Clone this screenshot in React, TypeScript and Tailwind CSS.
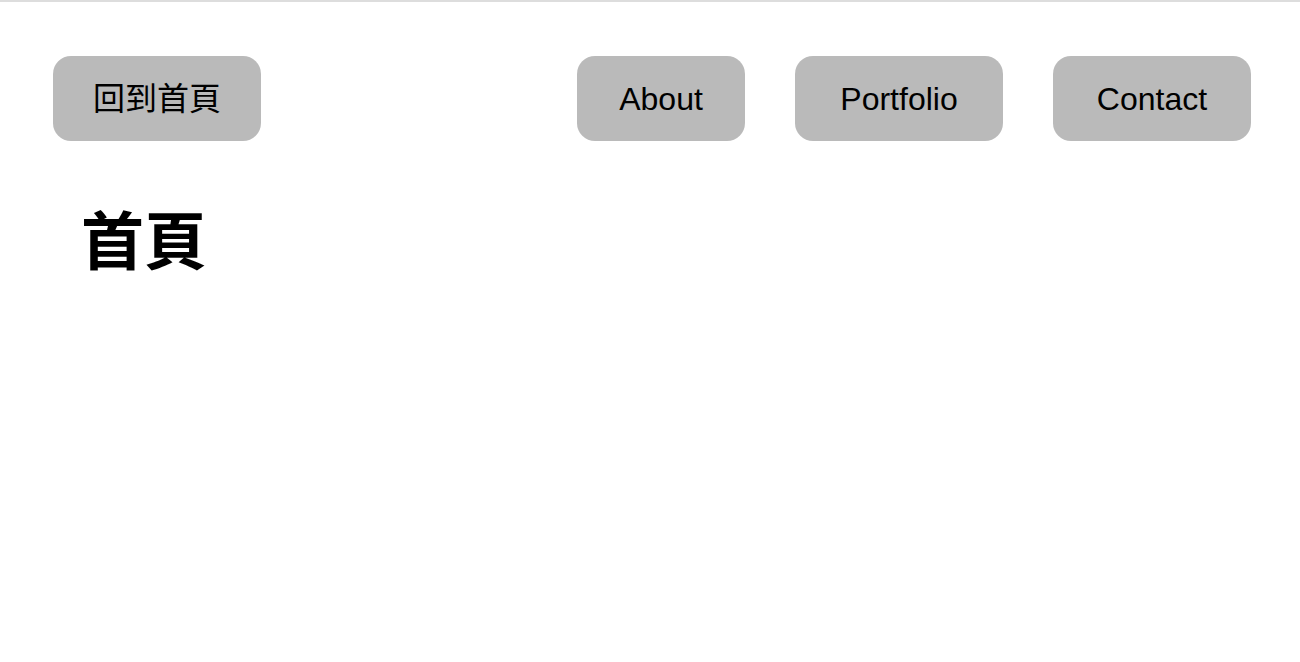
const font = { fontFamily: '"Liberation Sans", "Noto Sans CJK TC", sans-serif' };

function NavButton({ label, width }: { label: string; width: string }) {
  return (
    <button
      className={`${width} h-[85px] rounded-[18px] bg-[#bababa] text-[32px] text-black flex items-center justify-center`}
    >
      {label}
    </button>
  );
}

export default function App() {
  return (
    <div className="min-h-screen bg-white border-t-2 border-[#dddddd]" style={font}>
      <header className="flex items-center justify-between pl-[53px] pr-[49px] pt-[54px]">
        <NavButton label="回到首頁" width="w-[208px]" />
        <nav className="flex gap-[50px]">
          <NavButton label="About" width="w-[168px]" />
          <NavButton label="Portfolio" width="w-[208px]" />
          <NavButton label="Contact" width="w-[198px]" />
        </nav>
      </header>
      <main className="pl-[81px] pt-[70px]">
        <h1 className="text-[63px] font-bold leading-none text-black">首頁</h1>
      </main>
    </div>
  );
}
